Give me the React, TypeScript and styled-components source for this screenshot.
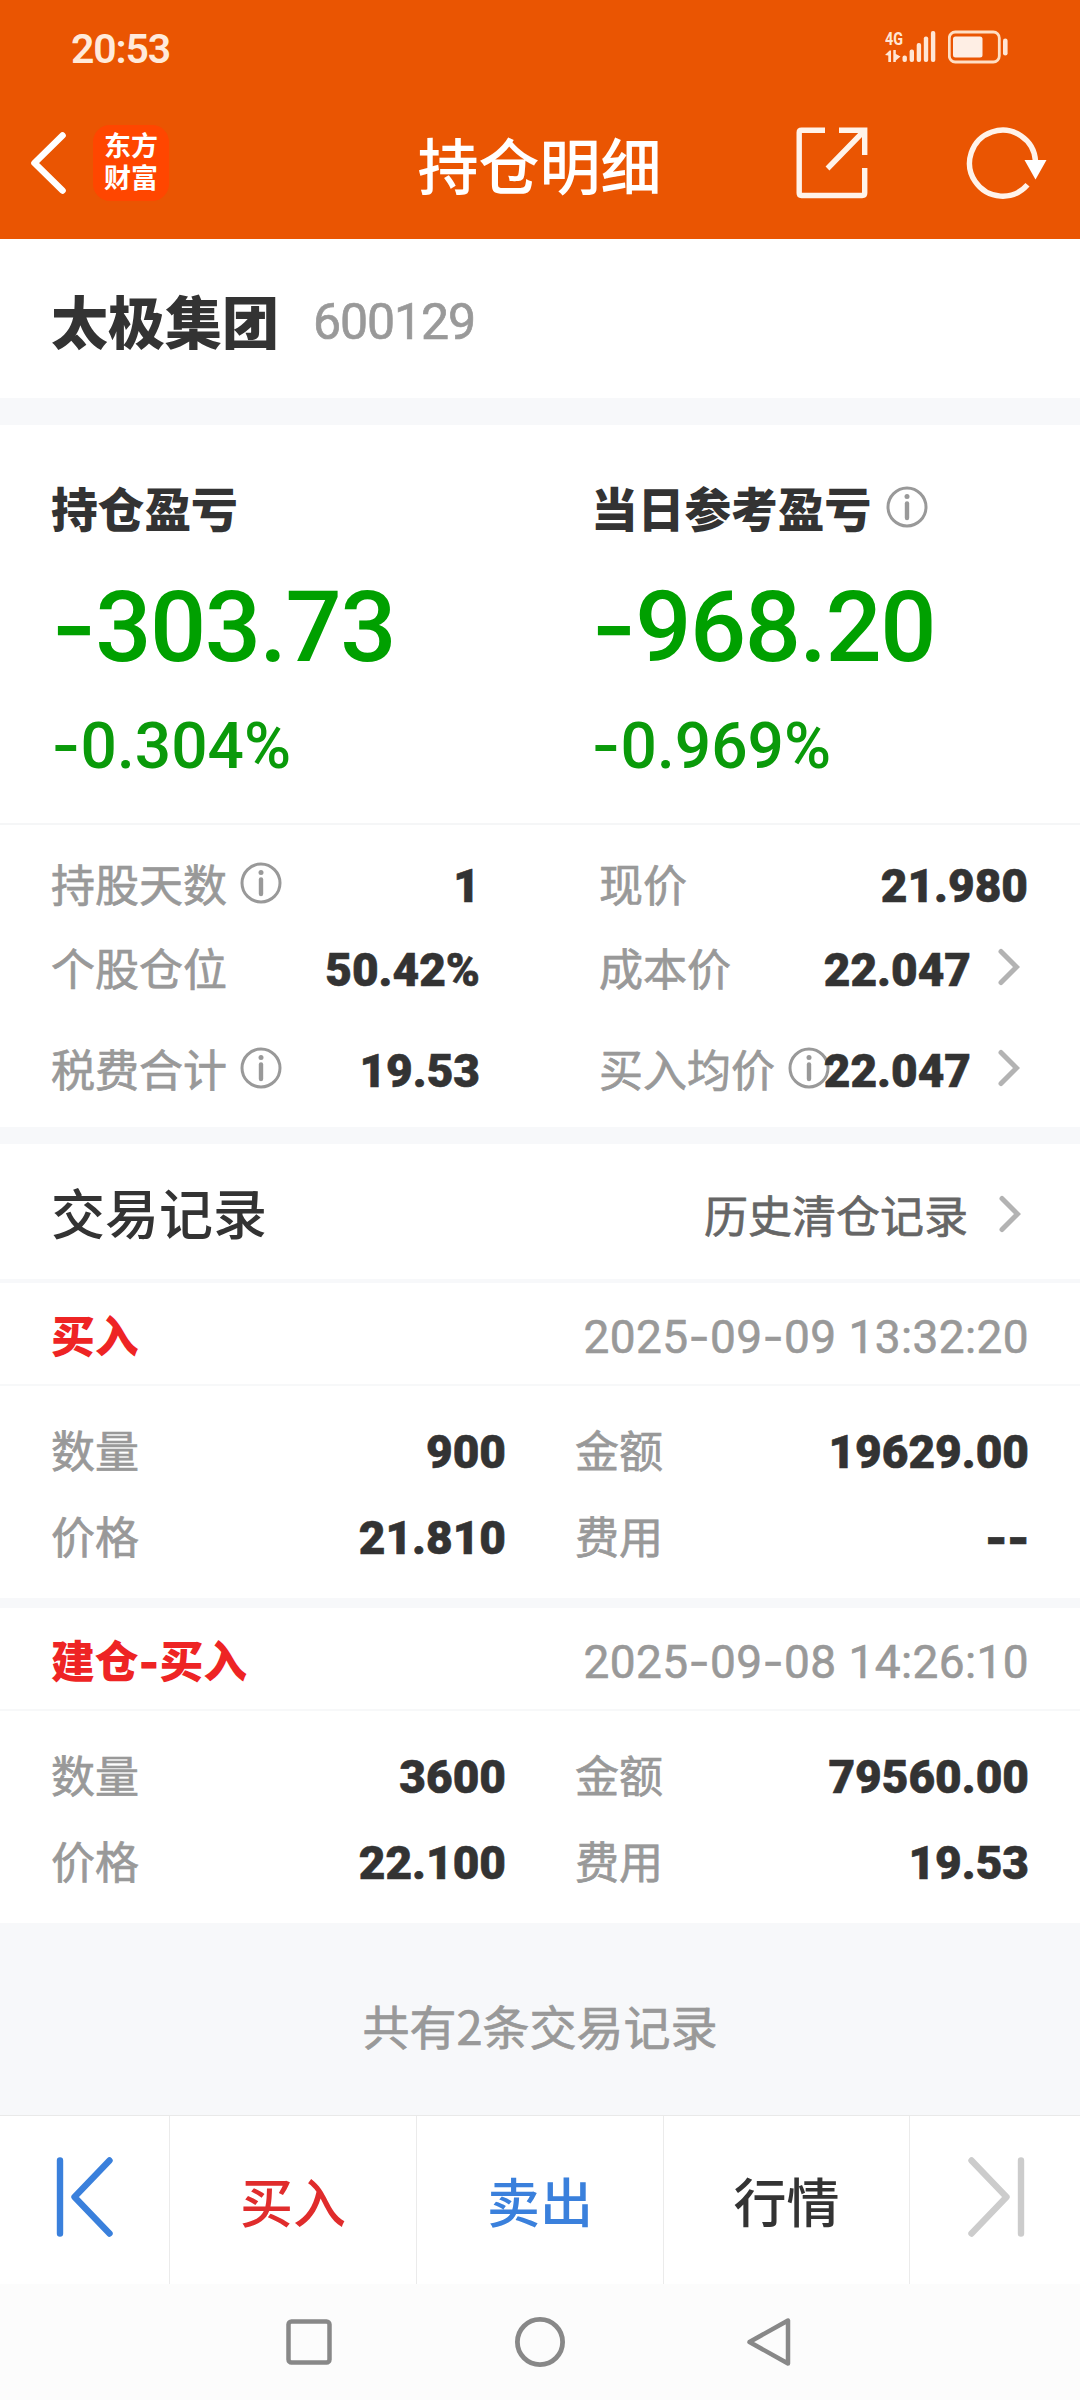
import React from "react";
import styled, { createGlobalStyle } from "styled-components";

const cjk = `"Noto Sans CJK SC", sans-serif`;
const latin = `Roboto, "Noto Sans CJK SC", sans-serif`;

const GlobalStyle = createGlobalStyle`
  * { box-sizing: border-box; }
  body { margin: 0; background: #f7f8fa; font-family: ${cjk}; }
`;

const Screen = styled.div`
  width: 1080px;
  height: 2400px;
  display: flex;
  flex-direction: column;
  overflow: hidden;
  background: #f7f8fa;
  color: #333;
`;

/* ---------- header ---------- */
const Header = styled.header`
  height: 239px;
  background: #ea5502;
  color: #fff;
`;
const StatusBar = styled.div`
  height: 94px;
  padding: 0 70px 0 71px;
  display: flex;
  align-items: center;
  justify-content: space-between;
`;
const Clock = styled.span`
  font: 600 41px/44px ${latin};
  letter-spacing: -1.2px;
  color: #ffeadb;
  padding-top: 3px;
`;
const StatusIcons = styled.div`
  display: flex;
  align-items: center;
  gap: 11px;
`;
const TitleBar = styled.div`
  height: 145px;
  padding: 0 32px 8px 28px;
  display: grid;
  grid-template-columns: 1fr auto 1fr;
  align-items: center;
`;
const TitleLeft = styled.div`
  display: flex;
  align-items: center;
  gap: 27px;
`;
const AppLogo = styled.div`
  width: 76px;
  height: 76px;
  border-radius: 17px;
  background: #ff4600;
  font: 700 27px/32px ${cjk};
  padding: 4px 0 0 11px;
`;
const Title = styled.h1`
  margin: 0;
  font: 500 61px/80px ${cjk};
  padding: 3px 0 0 3px;
`;
const TitleActions = styled.div`
  display: flex;
  justify-content: flex-end;
  gap: 98px;
`;

/* ---------- stock summary ---------- */
const StockBar = styled.section`
  height: 159px;
  padding: 0 51px;
  display: flex;
  align-items: center;
  gap: 34px;
  background: #fff;
`;
const StockName = styled.h2`
  margin: 0;
  font: 900 57px/80px ${cjk};
`;
const StockCode = styled.span`
  font: 400 50px/60px ${latin};
  letter-spacing: -1.1px;
  -webkit-text-stroke: 0.7px #999;
  color: #999;
  padding-top: 6px;
`;
const Gap = styled.div<{ $h: number }>`
  height: ${(p) => p.$h}px;
  flex: none;
`;

const ProfitPanel = styled.section`
  height: 400px;
  padding: 50px 51px 0;
  display: grid;
  grid-template-columns: 540px 1fr;
  background: #fff;
  border-bottom: 2px solid #f5f6f7;
`;
const ProfitLabel = styled.div`
  display: flex;
  align-items: center;
  gap: 15px;
  height: 64px;
  font: 900 46.7px/64px ${cjk};
`;
const ProfitValue = styled.div`
  height: 116px;
  font: 500 99px/116px ${latin};
  letter-spacing: -1.5px;
  color: #00a000;
  margin-top: 30px;
  white-space: nowrap;
`;
const ProfitRate = styled.div`
  height: 76px;
  font: 500 64px/76px ${latin};
  color: #0a9a0a;
  margin-top: 24px;
  white-space: nowrap;
`;
const Dash = styled.span`
  font-family: Inter, sans-serif;
  line-height: 1;
`;

/* ---------- key figures ---------- */
const Figures = styled.section`
  height: 302px;
  padding: 18px 51px 0;
  display: grid;
  grid-template-columns: 429px 429px;
  grid-template-rows: 84px 84px 118px;
  column-gap: 119px;
  background: #fff;
`;
const Figure = styled.div`
  display: flex;
  align-items: center;
  justify-content: space-between;
  min-width: 0;
`;
const Label = styled.span`
  display: flex;
  align-items: center;
  gap: 13px;
  font: 400 44px/60px ${cjk};
  -webkit-text-stroke: 0.7px #999;
  color: #999;
  white-space: nowrap;
  flex: none;
  padding-bottom: 5px;
`;
const Value = styled.span`
  display: flex;
  align-items: center;
  justify-content: flex-end;
  gap: 27px;
  font: 900 46px/60px ${latin};
  -webkit-text-stroke: 0.6px #333;
  color: #333;
  flex: 1 1 0;
  min-width: 0;
  white-space: nowrap;
  padding-top: 1px;
`;
const ChevronSlot = styled.span`
  width: 30px;
  flex: none;
  display: flex;
  padding-bottom: 5px;
`;

/* ---------- trade records ---------- */
const RecordsHead = styled.section`
  height: 135px;
  padding: 0 59px 0 51px;
  display: flex;
  align-items: center;
  justify-content: space-between;
  background: #fff;
`;
const RecordsTitle = styled.h3`
  margin: 0;
  font: 500 54px/72px ${cjk};
`;
const HistoryLink = styled.span`
  display: flex;
  align-items: center;
  gap: 31px;
  font: 400 44px/60px ${cjk};
  -webkit-text-stroke: 0.7px #666;
  color: #666;
  padding-top: 4px;
`;
const Card = styled.article`
  height: 315px;
  background: #fff;
`;
const CardHead = styled.div`
  height: 103px;
  padding: 0 51px;
  display: flex;
  align-items: center;
  justify-content: space-between;
  border-bottom: 2px solid #f7f8f9;
`;
const Side = styled.span`
  font: 900 43.8px/60px ${cjk};
  color: #ee2424;
`;
const Time = styled.time`
  font: 400 46px/60px ${latin};
  letter-spacing: 0.4px;
  -webkit-text-stroke: 0.6px #999;
  color: #999;
  padding-top: 6px;
`;
const CardGrid = styled.div`
  padding: 22px 51px 0;
  display: grid;
  grid-template-columns: 455px 454px;
  grid-auto-rows: 86px;
  column-gap: 69px;
`;
const Total = styled.div`
  height: 192px;
  display: flex;
  align-items: center;
  justify-content: center;
  padding-top: 11px;
  font: 400 47px/64px ${cjk};
  -webkit-text-stroke: 0.7px #999;
  color: #999;
`;

/* ---------- bottom bars ---------- */
const ActionBar = styled.nav`
  height: 169px;
  display: grid;
  grid-template-columns: 170px 247px 247px 246px 170px;
  background: #fff;
  border-top: 1px solid #e9e9e9;
`;
const Action = styled.button<{ $color: string; $up?: number }>`
  border: 0;
  border-right: 1px solid #ebebeb;
  background: none;
  padding: 0 0 ${(p) => p.$up ?? 0}px;
  display: flex;
  align-items: center;
  justify-content: center;
  font: 500 53px/72px ${cjk};
  color: ${(p) => p.$color};
  &:last-child { border-right: 0; padding-left: 2px; }
`;
const SystemNav = styled.nav`
  height: 116px;
  background: #fcfcfc;
  display: flex;
  justify-content: center;
  align-items: center;
  gap: 179px;
`;

const InfoIcon = () => (
  <svg width="42" height="42" viewBox="0 0 42 42" fill="none" stroke="#999">
    <circle cx="21" cy="21" r="19" strokeWidth="3" />
    <path d="M21 17.5V32" strokeWidth="4.4" strokeLinecap="round" />
    <circle cx="21" cy="10.5" r="2.5" fill="#999" stroke="none" />
  </svg>
);
const Chevron = () => (
  <svg width="22" height="38" viewBox="0 0 22 38" fill="none" stroke="#b3b3b3" strokeWidth="5" strokeLinecap="round">
    <path d="M3 3.5L18.5 19L3 34.5" />
  </svg>
);

const Num = ({ text }: { text: string }) => (
  <>
    {text.split(/(-+)/).map((part, i) =>
      part.startsWith("-") ? <Dash key={i}>{part}</Dash> : part
    )}
  </>
);

type Fig = { label: string; value: string; info?: boolean; link?: boolean };
const figures: Fig[] = [
  { label: "持股天数", value: "1", info: true },
  { label: "现价", value: "21.980" },
  { label: "个股仓位", value: "50.42%" },
  { label: "成本价", value: "22.047", link: true },
  { label: "税费合计", value: "19.53", info: true },
  { label: "买入均价", value: "22.047", info: true, link: true },
];

const records = [
  { side: "买入", time: "2025-09-09 13:32:20", rows: [["数量", "900"], ["金额", "19629.00"], ["价格", "21.810"], ["费用", "--"]] },
  { side: "建仓-买入", time: "2025-09-08 14:26:10", rows: [["数量", "3600"], ["金额", "79560.00"], ["价格", "22.100"], ["费用", "19.53"]] },
];

export default function App() {
  return (
    <Screen>
      <GlobalStyle />
      <Header>
        <StatusBar>
          <Clock>20:53</Clock>
          <StatusIcons>
            <svg width="52" height="54" viewBox="0 -10 52 54" fill="#ffe6d5">
              <text x="0" y="15" fontFamily="Roboto" fontWeight="700" fontSize="19" textLength="18" lengthAdjust="spacingAndGlyphs">4G</text>
              <path d="M0 25L4.6 20.5H6V32H3.3V25.5ZM8.3 20H10.8V24L15.5 26.5L10.8 30.5V32H8.3Z" />
              <rect x="17.5" y="25.5" width="4.4" height="6.5" rx="2" />
              <rect x="24.6" y="19.5" width="4.4" height="12.5" rx="2" />
              <rect x="31.7" y="13" width="4.4" height="19" rx="2" />
              <rect x="38.8" y="6.5" width="4.4" height="25.5" rx="2" />
              <rect x="45.9" y="1" width="4.4" height="31" rx="2" />
            </svg>
            <svg width="62" height="34" viewBox="0 0 62 34" fill="#ffe6d5">
              <rect x="1.3" y="2" width="50" height="30" rx="6" fill="none" stroke="#ffdfc4" strokeWidth="2.8" />
              <rect x="5" y="6.5" width="29.5" height="21" rx="2.5" fill="#feeee4" />
              <rect x="55" y="8.5" width="4.6" height="17" rx="2.3" />
            </svg>
          </StatusIcons>
        </StatusBar>
        <TitleBar>
          <TitleLeft>
            <svg width="38" height="64" viewBox="0 0 38 64" fill="none" stroke="#fff" strokeWidth="6.6" strokeLinecap="round" strokeLinejoin="round">
              <path d="M34.5 4.5L6.5 32L34.5 59.5" />
            </svg>
            <AppLogo>东方<br />财富</AppLogo>
          </TitleLeft>
          <Title>持仓明细</Title>
          <TitleActions>
            <svg width="72" height="72" viewBox="0 0 72 72" fill="none" stroke="#fff3ea" strokeWidth="5.4">
              <path d="M29 3.2H5.5Q3.2 3.2 3.2 5.5V66Q3.2 68.5 5.5 68.5H66.2Q68.7 68.5 68.7 66V41" />
              <path d="M43 3.2H68.7V28M68 4L31.5 41.5" />
            </svg>
            <svg width="82" height="72" viewBox="0 0 82 72">
              <path d="M69.5 34A33 33 0 1 0 61.5 57.8" fill="none" stroke="#fff3ea" strokeWidth="5.4" />
              <path d="M58.5 33H80.5L69.5 52.5Z" fill="#fff" />
            </svg>
          </TitleActions>
        </TitleBar>
      </Header>

      <StockBar>
        <StockName>太极集团</StockName>
        <StockCode>600129</StockCode>
      </StockBar>
      <Gap $h={27} />

      <ProfitPanel>
        <div>
          <ProfitLabel>持仓盈亏</ProfitLabel>
          <ProfitValue><Num text="-303.73" /></ProfitValue>
          <ProfitRate><Num text="-0.304%" /></ProfitRate>
        </div>
        <div>
          <ProfitLabel>当日参考盈亏 <InfoIcon /></ProfitLabel>
          <ProfitValue><Num text="-968.20" /></ProfitValue>
          <ProfitRate><Num text="-0.969%" /></ProfitRate>
        </div>
      </ProfitPanel>

      <Figures>
        {figures.map((f) => (
          <Figure key={f.label}>
            <Label>{f.label}{f.info && <InfoIcon />}</Label>
            <Value>{f.value}{f.link && <ChevronSlot><Chevron /></ChevronSlot>}</Value>
          </Figure>
        ))}
      </Figures>
      <Gap $h={17} />

      <RecordsHead>
        <RecordsTitle>交易记录</RecordsTitle>
        <HistoryLink>历史清仓记录<Chevron /></HistoryLink>
      </RecordsHead>
      <Gap $h={4} />

      {records.map((r, i) => (
        <React.Fragment key={r.time}>
          {i > 0 && <Gap $h={10} />}
          <Card>
            <CardHead>
              <Side><Num text={r.side} /></Side>
              <Time><Num text={r.time} /></Time>
            </CardHead>
            <CardGrid>
              {r.rows.map(([label, value]) => (
                <Figure key={label}>
                  <Label>{label}</Label>
                  <Value><span><Num text={value} /></span></Value>
                </Figure>
              ))}
            </CardGrid>
          </Card>
        </React.Fragment>
      ))}
      <Total>共有2条交易记录</Total>

      <ActionBar>
        <Action $color="#3a80dc" $up={6}>
          <svg width="58" height="82" viewBox="0 0 58 82" fill="none" stroke="#3a80dc" strokeWidth="6.4" strokeLinecap="round" strokeLinejoin="round">
            <path d="M4 4.5V77.5M53.5 4.5L18.5 41L53.5 77.5" />
          </svg>
        </Action>
        <Action $color="#e02c2c">买入</Action>
        <Action $color="#3a80dc">卖出</Action>
        <Action $color="#333">行情</Action>
        <Action $color="#ccc" $up={6}>
          <svg width="58" height="82" viewBox="0 0 58 82" fill="none" stroke="#ccc" strokeWidth="6.4" strokeLinecap="round" strokeLinejoin="round">
            <path d="M54 4.5V77.5M4.5 4.5L39.5 41L4.5 77.5" />
          </svg>
        </Action>
      </ActionBar>
      <SystemNav>
        <svg width="52" height="52" viewBox="0 0 52 52" fill="none" stroke="#888" strokeWidth="4.5">
          <rect x="5.5" y="5.5" width="41" height="41" rx="3" />
        </svg>
        <svg width="52" height="52" viewBox="0 0 52 52" fill="none" stroke="#888" strokeWidth="4.8">
          <circle cx="26" cy="26" r="22.6" />
        </svg>
        <svg width="52" height="52" viewBox="0 0 52 52" fill="none" stroke="#888" strokeWidth="4.5" strokeLinejoin="round">
          <path d="M43 4.5V47.5L4.5 26Z" />
        </svg>
      </SystemNav>
    </Screen>
  );
}
